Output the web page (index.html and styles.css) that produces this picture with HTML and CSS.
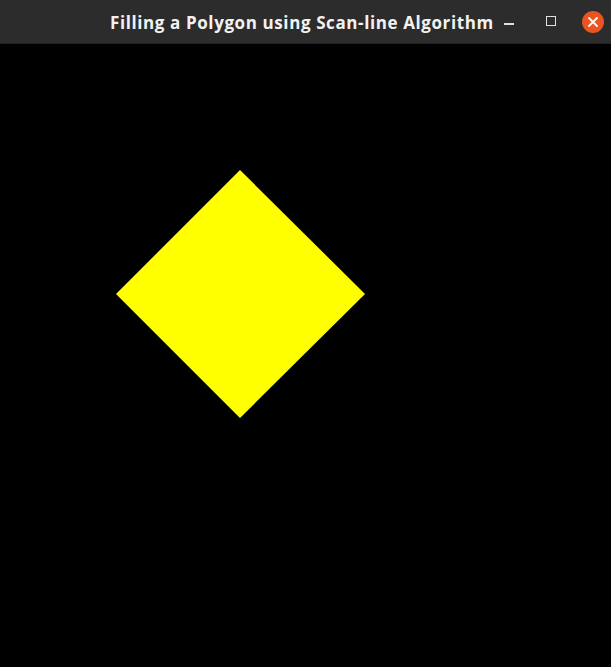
FILE: index.html
```html
<!DOCTYPE html>
<html>
<head>
<meta charset="utf-8">
<link rel="stylesheet" href="styles.css">
</head>
<body>
<div class="window">
  <header class="titlebar">
    <span class="title">Filling a Polygon using Scan-line Algorithm</span>
    <div class="controls">
      <span class="btn min"></span>
      <span class="btn max"></span>
      <span class="btn close">
        <svg width="22" height="22" viewBox="0 0 22 22"><circle cx="11" cy="11" r="11" fill="#e95420"/><path d="M7 7 L15 15 M15 7 L7 15" stroke="#fff" stroke-width="1.8" stroke-linecap="round"/></svg>
      </span>
    </div>
  </header>
  <main class="canvas">
    <svg class="drawing" width="611" height="623" viewBox="0 44 611 623">
      <polygon points="240,170 365,294 240,418 116,294" fill="#ffff00"/>
    </svg>
  </main>
</div>
</body>
</html>
```
FILE: styles.css
```css
html, body {
  margin: 0;
  padding: 0;
  background: #000;
}
.window {
  width: 611px;
  height: 667px;
  display: flex;
  flex-direction: column;
}
.titlebar {
  height: 44px;
  flex: 0 0 44px;
  background: #2c2c2c;
  border-bottom: 1px solid #222;
  box-sizing: border-box;
  display: flex;
  align-items: center;
  padding-left: 110px;
  padding-right: 7px;
}
.title {
  font-family: "Open Sans", "DejaVu Sans", sans-serif;
  font-weight: 700;
  font-size: 17px;
  color: #f2f2f2;
  white-space: nowrap;
  letter-spacing: 0.6px;
  margin-top: 1px;
}
.controls {
  display: flex;
  align-items: center;
  margin-left: auto;
}
.btn {
  display: block;
}
.min {
  width: 10px;
  height: 1.5px;
  background: #e0e0e0;
  margin-top: 5px;
}
.max {
  width: 8px;
  height: 8px;
  border: 1.5px solid #e0e0e0;
  margin-left: 32px;
  margin-bottom: 1px;
}
.close {
  margin-left: 26px;
  width: 22px;
  height: 22px;
  margin-top: 1px;
}
.close svg {
  display: block;
}
.canvas {
  flex: 1;
  background: #000;
}
.drawing {
  display: block;
}
```
